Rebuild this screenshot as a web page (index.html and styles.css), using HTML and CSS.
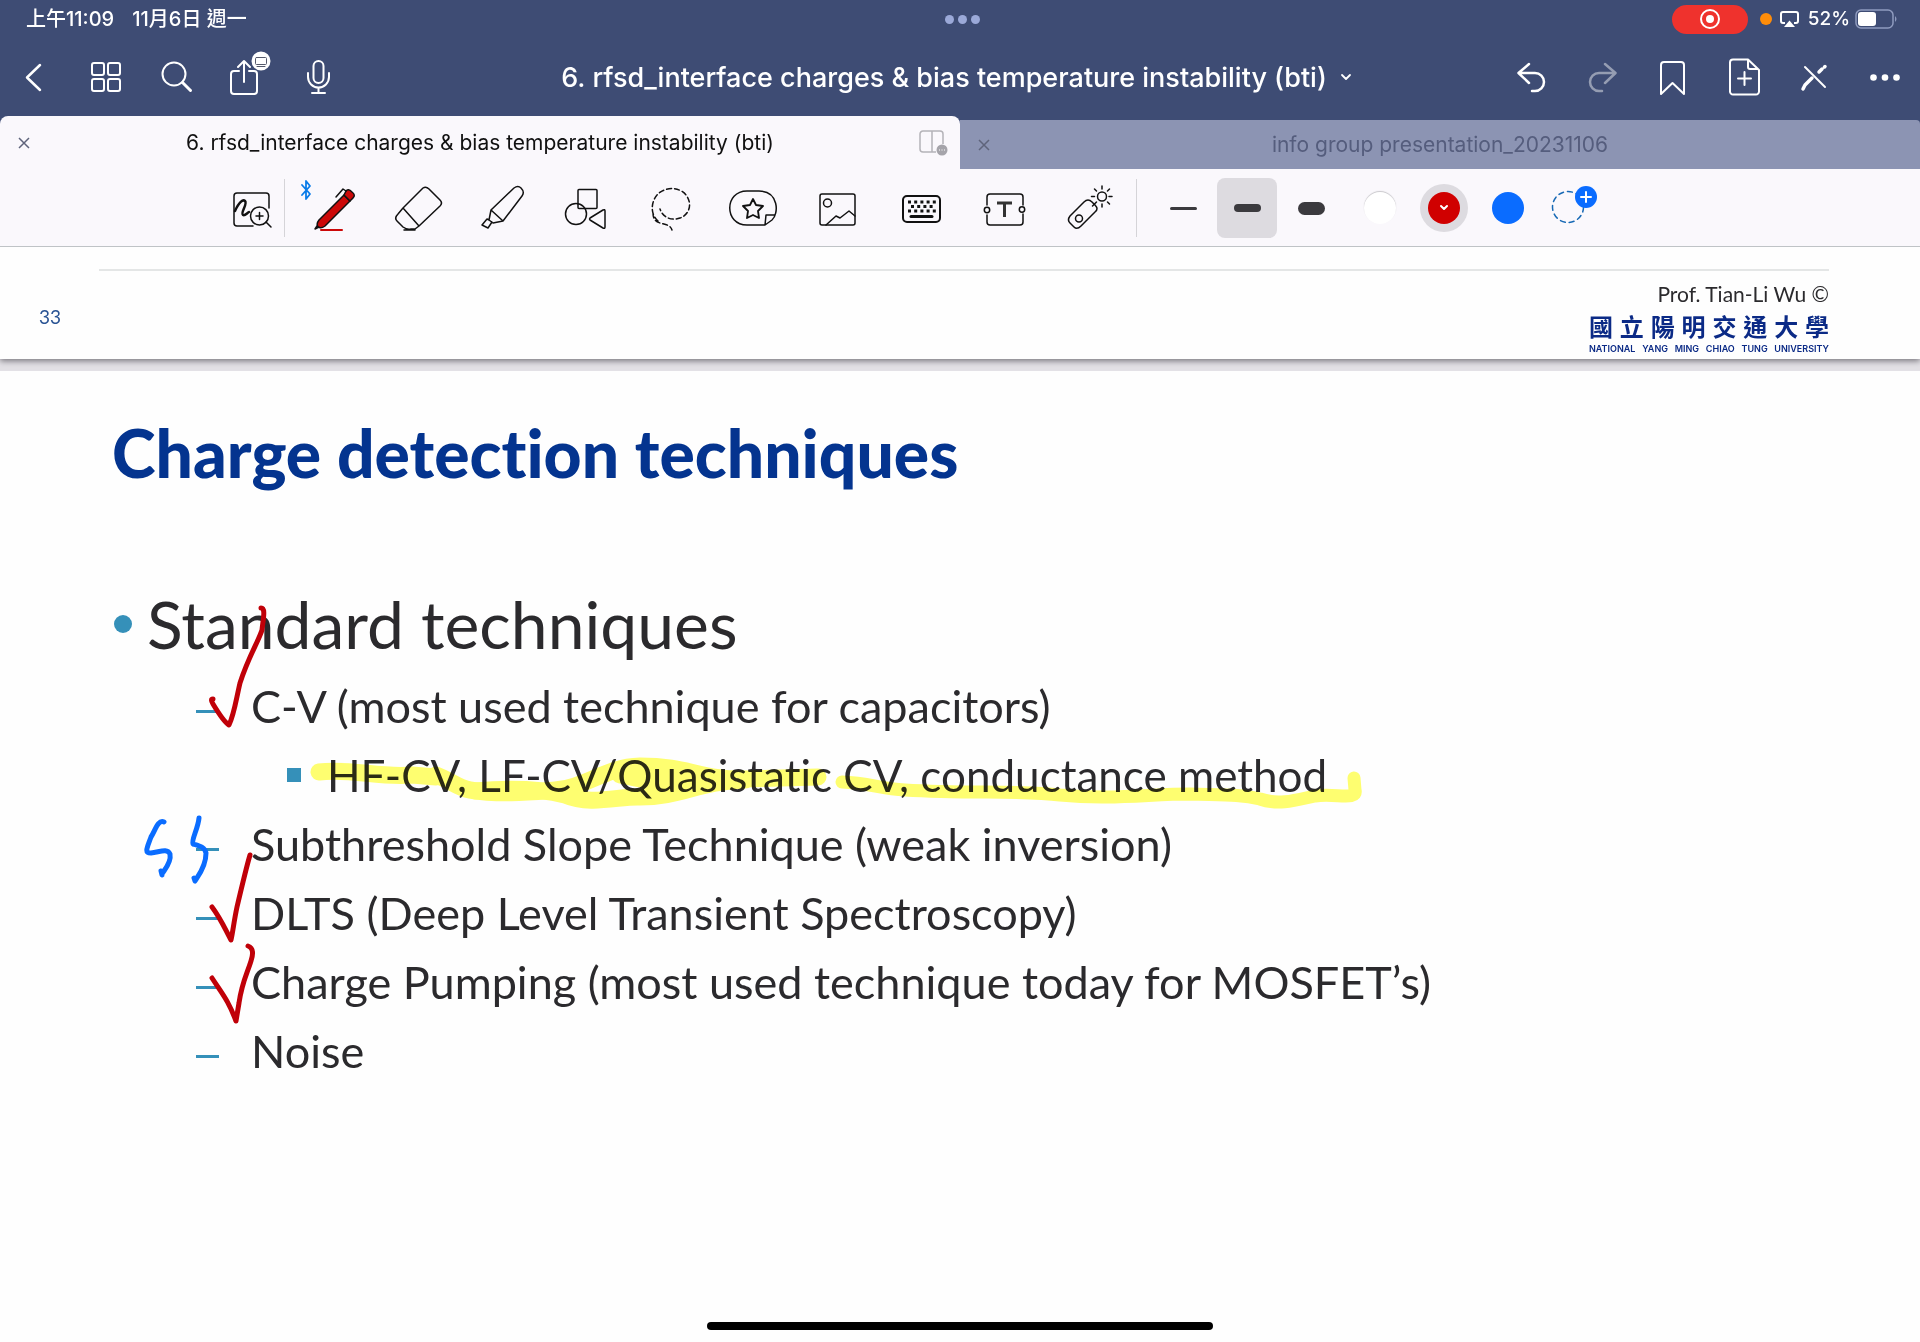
FILE: index.html
```html
<!DOCTYPE html>
<html lang="zh-Hant">
<head>
<meta charset="utf-8">
<meta name="viewport" content="width=device-width, initial-scale=1">
<title>6. rfsd_interface charges &amp; bias temperature instability (bti)</title>
<link rel="stylesheet" href="styles.css">
</head>
<body>
<header class="chrome">
  <div class="status">
    <div class="status-left"><span>上午11:09</span><span>11月6日 週一</span></div>
    <div class="status-mid"><i></i><i></i><i></i></div>
    <div class="status-right">
      <span class="rec"><svg width="22" height="22" viewBox="0 0 22 22"><circle cx="11" cy="11" r="9" fill="none" stroke="#fff" stroke-width="2"/><circle cx="11" cy="11" r="4" fill="#fff"/></svg></span>
      <span class="mic-dot"></span>
      <svg class="airplay" width="20" height="18" viewBox="0 0 20 18"><path d="M5 13H3a2 2 0 0 1-2-2V4a2 2 0 0 1 2-2h13a2 2 0 0 1 2 2v7a2 2 0 0 1-2 2h-2" fill="none" stroke="#fff" stroke-width="2"/><path d="M9.500 10.500 15 17H4z" fill="#fff"/></svg>
      <span class="percent">52%</span>
      <svg width="43" height="20" viewBox="0 0 43 20"><rect x="1" y="1" width="37" height="18" rx="5" fill="none" stroke="#8f9bbf" stroke-width="1.500"/><rect x="3" y="3" width="18" height="14" rx="3" fill="#fff"/><path d="M40 7q3 3 0 6z" fill="#8f9bbf"/></svg>
    </div>
  </div>
  <div class="nav">
    <div class="nav-group">
      <button class="nav-btn" aria-label="Back"><svg viewBox="0 0 71 76"><path d="M40 25 27 37.500 40 50"/></svg></button>
      <button class="nav-btn" aria-label="Thumbnails"><svg viewBox="0 0 71 76"><g stroke-width="2"><rect x="21" y="23" width="12" height="12" rx="2"/><rect x="37" y="23" width="12" height="12" rx="2"/><rect x="21" y="39" width="12" height="12" rx="2"/><rect x="37" y="39" width="12" height="12" rx="2"/></g></svg></button>
      <button class="nav-btn" aria-label="Search"><svg viewBox="0 0 71 76"><circle cx="32" cy="34" r="11.500" stroke-width="2"/><path d="m40.500 42.500 8 8" stroke-width="3"/></svg></button>
      <button class="nav-btn" aria-label="Share"><svg viewBox="0 0 71 76"><g stroke-width="2"><path d="M26 31h-5a3 3 0 0 0-3 3v17a3 3 0 0 0 3 3h20a3 3 0 0 0 3-3V34a3 3 0 0 0-3-3h-5M31 42V21M25 27l6-6 6 6"/></g><circle cx="48" cy="21" r="9.500" fill="#fff" stroke="none"/><g stroke="#55596b" stroke-width="1"><rect x="42.500" y="17.500" width="11" height="7" rx="1"/><path d="M44 26.500h8"/></g></svg></button>
      <button class="nav-btn" aria-label="Record"><svg viewBox="0 0 71 76"><g stroke-width="2"><rect x="29.500" y="21" width="10" height="22" rx="5"/><path d="M24 33v4a10.500 10.500 0 0 0 21 0v-4M34.500 48v5M28 53h13"/></g></svg></button>
    </div>
    <button class="doc-title"><span>6. rfsd_interface charges &amp; bias temperature instability (bti)</span><svg width="12" height="8" viewBox="0 0 12 8"><path d="m2 2 4 4 4-4" stroke-width="1.800"/></svg></button>
    <div class="nav-group">
      <button class="nav-btn" aria-label="Undo"><svg viewBox="0 0 71 76"><path d="M35 24 24.500 33 35 43M25 33h16a9 9 0 0 1 0 18h-3"/></svg></button>
      <button class="nav-btn dim" aria-label="Redo" disabled><svg viewBox="0 0 71 76"><path d="m40 24 10.500 9L40 43M50 33H34a9 9 0 0 0 0 18h3"/></svg></button>
      <button class="nav-btn" aria-label="Bookmark"><svg viewBox="0 0 71 76"><path d="M25 54V25a3 3 0 0 1 3-3h17a3 3 0 0 1 3 3v29L36.500 43z" stroke-width="2"/></svg></button>
      <button class="nav-btn" aria-label="Add page"><svg viewBox="0 0 71 76"><g stroke-width="2"><path d="M41 19.500H26a3 3 0 0 0-3 3v29a3 3 0 0 0 3 3h23a3 3 0 0 0 3-3V30zM41 20v7a2 2 0 0 0 2 2h8"/><path d="M37.500 32v13M31 38.500h13"/></g></svg></button>
      <button class="nav-btn" aria-label="Read only"><svg viewBox="0 0 71 76"><path d="m27 27 20 20" stroke-width="2"/><path d="m25 49 2-4 7-7M41 32l3-3M46.500 27l.5-.5" stroke-width="3.500"/></svg></button>
      <button class="nav-btn" aria-label="More"><svg viewBox="0 0 71 76"><g fill="#fff" stroke="none"><circle cx="24.500" cy="37.500" r="3.300"/><circle cx="36" cy="37.500" r="3.300"/><circle cx="47.500" cy="37.500" r="3.300"/></g></svg></button>
    </div>
  </div>
  <div class="tabs">
    <div class="tab active">
      <button class="tab-close" aria-label="Close tab"><svg width="12" height="12" viewBox="0 0 12 12"><path d="m1 1 10 10M11 1 1 11"/></svg></button>
      <span>6. rfsd_interface charges &amp; bias temperature instability (bti)</span>
      <button class="tab-split" aria-label="Split view"><svg width="30" height="26" viewBox="0 0 30 26"><path d="M17 22H4a3 3 0 0 1-3-3V4a3 3 0 0 1 3-3h17a3 3 0 0 1 3 3v10M13 1v21" fill="none" stroke="#b4b3b8" stroke-width="1.500"/><circle cx="23" cy="20" r="5.500" fill="#a5a4aa"/><path d="M20 20h1m1.500 0h1m1.500 0h1" stroke="#fff"/></svg></button>
    </div>
    <div class="tab">
      <button class="tab-close" aria-label="Close tab"><svg width="12" height="12" viewBox="0 0 12 12"><path d="m1 1 10 10M11 1 1 11"/></svg></button>
      <span>info group presentation_20231106</span>
    </div>
  </div>
</header>

<div class="toolbar" role="toolbar" aria-label="Drawing tools">
  <button class="tool" aria-label="Zoom window"><svg viewBox="0 0 84 77"><path d="M43 57H27a3 3 0 0 1-3-3V27a3 3 0 0 1 3-3h29a3 3 0 0 1 3 3v12"/><path d="M25 42c4-9 8-12 10-10 3 3-5 12-2 14 2 1 4-2 6-3" stroke-width="2.500"/><circle cx="49.500" cy="47" r="9"/><path d="m56 53 5 5M49.500 43.500v7M46 47h7"/></svg></button>
  <i class="rule after-zoom"></i>
  <button class="tool" aria-label="Pen"><svg viewBox="0 0 84 77"><path d="m8 16 8 9-4 5V12l4 5-8 9" stroke="#087be8" stroke-width="1.800"/><path d="m25 51 25-25 6 6-25 25q-4 3-7 1-2-3 1-7z" fill="#cc0909"/><path d="m50 26 2-4q2-3 6 1 4 3 1 6l-3 3z" fill="#cc0909"/><path d="m42 28 7-8 3 2M23 57l-2 3 4-2"/><path d="M27 61h21" stroke="#cc0909" stroke-width="2"/></svg></button>
  <button class="tool" aria-label="Eraser"><svg viewBox="0 0 84 77"><path d="m25 39 20-20q3-2 6 1l11 11q3 3 0 6L41 57zM25 39l-5 6q-4 4-1 7l6 6q4 3 8 2h4l4-3M26 61h11"/></svg></button>
  <button class="tool" aria-label="Highlighter"><svg viewBox="0 0 84 77"><path d="m29 41 23-22q4-3 7 0 4 4 1 8L41 52zM29 41l-2 10 4 3 10-2M27 51l-2-1-5 6 6 3 4-6"/></svg></button>
  <button class="tool" aria-label="Shapes"><svg viewBox="0 0 84 77"><rect x="32" y="20.500" width="19" height="19" rx="1"/><circle cx="30" cy="45" r="10.500"/><path d="m44 49 13-8q2-1 2 1v16q0 2-2 1l-13-8q-1-1 0-2z"/></svg></button>
  <button class="tool" aria-label="Lasso"><svg viewBox="0 0 84 77"><path d="M28 52c-8-7-7-19-1-26 8-9 23-8 29 0 7 9 3 20-6 23-8 3-17 0-20-9M23 44c0 15 16 7 19 17" stroke-dasharray="5 3"/></svg></button>
  <button class="tool" aria-label="Stickers"><svg viewBox="0 0 84 77"><path d="M33 22h12c20 0 20 23 13 29l-7 5H33c-23 0-23-34 0-34zM51 56l1-10h9"/><path d="m39 30 3 6 7 1-5 5 1 7-6-3-6 3 1-7-5-5 7-1z" stroke-width="1.800"/></svg></button>
  <button class="tool" aria-label="Image"><svg viewBox="0 0 84 77"><rect x="22" y="25" width="35" height="31" rx="2"/><circle cx="29.500" cy="34" r="4"/><path d="m28 56 10-9 4 2 9-7 6 5"/></svg></button>
  <button class="tool" aria-label="Keyboard"><svg viewBox="0 0 84 77"><rect x="21" y="27" width="37" height="26" rx="4" stroke-width="2"/><path d="M26 33h28M26 42h28" stroke-width="3" stroke-dasharray="3 3.200" stroke-linecap="butt"/><path d="M29 37.500h22" stroke-width="3" stroke-dasharray="3 3.200" stroke-linecap="butt"/><path d="M29 47.500h21" stroke-width="3"/></svg></button>
  <button class="tool" aria-label="Text"><svg viewBox="0 0 84 77"><path d="M21 36V28q0-3 3-3h30q3 0 3 3v8M21 46v7q0 3 3 3h30q3 0 3-3v-8"/><circle cx="21" cy="41" r="2.700"/><circle cx="56" cy="40.500" r="2.700"/><path d="M31 34h15M38.500 34v14" stroke="#333" stroke-width="3" stroke-linecap="butt"/></svg></button>
  <button class="tool" aria-label="Laser pointer"><svg viewBox="0 0 84 77"><path d="m20 47 14-14q4-4 8 0l3 3q4 4 0 7L31 57q-4 4-7 1l-4-4q-3-3 0-7z"/><circle cx="29" cy="49.500" r="3.500"/><circle cx="52" cy="27.500" r="4.500"/><path d="M52 20v-3M52 38v-3M44.500 27.500h-3M62 27.500h-3M46.500 22l-2-2M57.500 22l2-2M57.500 33l2 2M46.500 33l-4 4"/></svg></button>
  <i class="rule after-tools"></i>
  <button class="width" aria-label="Thin"><i class="thin"></i></button>
  <button class="width selected" aria-label="Medium"><i class="medium"></i></button>
  <button class="width" aria-label="Thick"><i class="thick"></i></button>
  <div class="colors">
    <button class="color" aria-label="White"><i class="swatch white"></i></button>
    <button class="color" aria-label="Red"><i class="swatch red"><svg width="10" height="7" viewBox="0 0 10 7"><path d="m2 2 3 3 3-3" stroke="#fff" stroke-width="2"/></svg></i></button>
    <button class="color" aria-label="Blue"><i class="swatch blue"></i></button>
    <button class="color" aria-label="Add colour"><svg viewBox="0 0 64 77"><circle cx="28" cy="38" r="15.500" stroke="#1769b5" stroke-dasharray="5 4"/><circle cx="46" cy="28" r="11" fill="#0a6cff" stroke="none"/><path d="M46 23v10M41 28h10" stroke="#fff" stroke-width="2"/></svg></button>
  </div>
</div>

<main class="pages">
  <section class="page-end">
    <span class="page-number">33</span>
    <div class="credit">
      <p class="prof">Prof. Tian-Li Wu ©</p>
      <p class="uni-zh">國 立 陽 明 交 通 大 學</p>
      <p class="uni-en">NATIONAL YANG MING CHIAO TUNG UNIVERSITY</p>
    </div>
  </section>
  <section class="slide">
    <h1>Charge detection techniques</h1>
    <ul class="topics">
      <li class="topic">Standard techniques
        <ul class="methods">
          <li>C-V (most used technique for capacitors)
            <ul class="details"><li>HF-CV, LF-CV/Quasistatic CV, conductance method</li></ul>
          </li>
          <li>Subthreshold Slope Technique (weak inversion)</li>
          <li>DLTS (Deep Level Transient Spectroscopy)</li>
          <li>Charge Pumping (most used technique today for MOSFET’s)</li>
          <li>Noise</li>
        </ul>
      </li>
    </ul>
    <svg class="ink marker" width="1400" height="700" viewBox="0 371 1400 700" aria-hidden="true">
      <g stroke="#ffff70" stroke-width="17">
        <path d="M319 772 C350 768 380 778 412 775 L436 777"/>
        <path d="M436 775 C450 780 458 788 470 790 C500 795 530 792 555 790 C585 788 605 767 640 766 C690 766 700 780 745 779 L818 777"/>
        <path d="M475 791 C520 787 545 790 565 795 C590 806 620 796 640 797 C680 797 700 781 745 780"/>
        <path d="M620 775 L660 783 L700 778"/>
      </g>
      <path stroke="#ffff70" stroke-width="13" d="M842 782 C870 783 880 789 905 790 C970 794 1020 790 1060 795 C1110 800 1150 794 1190 794 C1220 795 1240 794 1260 799 C1280 806 1300 799 1315 796 C1335 793 1358 801 1355 790 L1354 778"/>
    </svg>
    <svg class="ink" width="1400" height="700" viewBox="0 371 1400 700" aria-hidden="true">
      <g stroke="#c00008" stroke-width="5">
        <path d="M261 608 C266 608 263 620 262 630 C259 640 248 658 240 683 C236 700 234 715 229 725 C224 722 219 714 213 704 Q210 699 213 699"/>
        <path d="M250 855 C247 865 241 890 237 907 C234 921 233 931 231 940 C225 929 221 919 212 907"/>
        <path d="M248 946 C254 948 253 955 251 961 C247 974 242 982 239 1003 L236 1021 C228 1000 223 995 212 978"/>
      </g>
      <g stroke="#0a6cff" stroke-width="5">
        <path d="M164 822 C158 819 155 831 151 837 C147 848 144 853 151 853 C160 852 167 848 170 854 C172 864 161 873 162 875 L161 871"/>
        <path d="M199 818 C198 829 191 840 193 844 C200 846 205 847 206 853 C206 867 198 876 195 881 L194 878"/>
      </g>
    </svg>
    <i class="home"></i>
  </section>
</main>
</body>
</html>
```
FILE: styles.css
```css
* { box-sizing: border-box; }

body {
  margin: 0;
  min-height: 100vh;
  display: flex;
  flex-direction: column;
  background: #fefefe;
  color: #2b2a2d;
  font-family: Inter, "Noto Sans CJK TC", sans-serif;
}

button {
  margin: 0;
  padding: 0;
  border: 0;
  background: none;
  color: inherit;
  font: inherit;
}

svg { display: block; flex: none; }
p, h1, ul { margin: 0; padding: 0; }
ul { list-style: none; }

/* status bar, navigation and tabs */
.chrome { background: #3e4c74; color: #fff; }

.status {
  display: grid;
  grid-template-columns: 1fr auto 1fr;
  align-items: center;
  height: 40px;
  padding: 0 22px 2px 26px;
  font-size: 19px;
  font-weight: 500;
  line-height: 24px;
}
.status-left { display: flex; gap: 18px; font-size: 20px; }
.status-mid { display: flex; gap: 4px; }
.status-mid i { width: 9px; height: 9px; border-radius: 50%; background: #9ba9d8; }
.status-right { display: flex; align-items: center; justify-content: flex-end; }
.rec {
  display: flex;
  align-items: center;
  justify-content: center;
  width: 76px;
  height: 29px;
  border-radius: 15px;
  background: #ef322d;
}
.mic-dot { width: 12px; height: 12px; margin: 0 8px 0 12px; border-radius: 50%; background: #ff8d0a; }
.percent { margin: 0 5px 0 8px; }

.nav { display: flex; justify-content: space-between; height: 76px; }
.nav-group { display: flex; }
.nav-btn { width: 71px; height: 76px; }
.nav svg {
  fill: none;
  stroke: #fff;
  stroke-width: 2.5;
  stroke-linecap: round;
  stroke-linejoin: round;
}
.dim svg { opacity: .45; }
.doc-title {
  display: flex;
  align-items: center;
  gap: 13px;
  margin-left: 64px;
  padding-bottom: 2px;
  font-size: 27px;
  font-weight: 500;
  white-space: nowrap;
}

.tabs { display: grid; grid-template-columns: 1fr 1fr; align-items: end; font-size: 21px; }
.tab {
  display: grid;
  grid-template-columns: 48px 1fr 48px;
  align-items: center;
  height: 49px;
  border-radius: 0 4px 0 0;
  background: #8c94b3;
  color: #555d7d;
  text-align: center;
}
.tab.active { height: 53px; border-radius: 8px 8px 0 0; background: #faf8fc; color: #111; }
.tab-close { display: flex; justify-content: center; }
.tab-close path { fill: none; stroke: #5f647b; stroke-width: 1.5; }
.tab-split { display: flex; justify-content: flex-end; padding-right: 11px; }

/* drawing tools */
.toolbar {
  position: relative;
  z-index: 1;
  display: flex;
  height: 78px;
  padding-left: 210px;
  border-bottom: 1px solid #bfc3c6;
  background: #faf8fc;
}
.toolbar svg {
  fill: none;
  stroke: #111;
  stroke-width: 1.5;
  stroke-linecap: round;
  stroke-linejoin: round;
}
.tool { width: 84px; height: 77px; flex: none; }
.rule { width: 1px; height: 58px; margin-top: 10px; background: #d5d4d8; }
.after-zoom { margin-left: -10px; margin-right: 9px; }
.after-tools { margin-left: 2px; margin-right: 14px; }
.width {
  display: flex;
  align-items: center;
  justify-content: center;
  width: 60px;
  height: 60px;
  margin: 9px 2px;
  border-radius: 8px;
}
.width.selected { background: #dddbe0; }
.width i { width: 27px; border-radius: 7px; background: #3b3a3e; }
.thin { height: 3px; }
.medium { height: 8px; }
.thick { height: 13px; }
.colors { display: flex; margin-left: 5px; }
.color { display: flex; align-items: center; justify-content: center; width: 64px; height: 77px; }
.swatch { display: flex; align-items: center; justify-content: center; width: 32px; height: 32px; border-radius: 50%; }
.white { background: #fff; box-shadow: 0 -1px 1px #c9c8cc; }
.red { background: #d00000; box-shadow: 0 0 0 8px #dddbe0; }
.blue { background: #0a6cff; }

/* document pages */
.pages {
  display: flex;
  flex: 1;
  flex-direction: column;
  font-family: Lato, "Noto Sans CJK TC", sans-serif;
  font-variant-ligatures: none;
}
.page-end {
  display: flex;
  justify-content: space-between;
  height: 112px;
  margin-bottom: 12px;
  padding: 22px 91px 0 39px;
  background: linear-gradient(#e4e6e6, #e4e6e6) 99px 22px / calc(100% - 190px) 2px no-repeat #fefefe;
  box-shadow: 0 2px 6px #77757c, 0 12px 0 #e3e1e6;
}
.page-number { margin-top: 36px; color: #2a5494; font-size: 19px; line-height: 24px; }
.credit { width: 240px; }
.prof { margin-top: 12px; font-size: 21px; line-height: 26px; text-align: right; white-space: nowrap; }
.uni-zh {
  color: #0b2a86;
  font-family: "Noto Sans CJK TC", sans-serif;
  font-size: 24px;
  font-weight: 700;
  line-height: 37px;
  text-align-last: justify;
  white-space: nowrap;
}
.uni-en {
  color: #0b2a86;
  font-family: Inter, sans-serif;
  font-size: 9px;
  font-weight: 600;
  line-height: 10px;
  text-align-last: justify;
  white-space: nowrap;
}

.slide {
  position: relative;
  display: flex;
  flex: 1;
  flex-direction: column;
  padding: 42px 91px 12px 112px;
  background: #fefefe;
}
h1 { color: #04348f; font-size: 66px; font-weight: 900; line-height: 80px; }
.topics { margin-top: 91px; }
.topic { padding-left: 35px; font-size: 66px; line-height: 80px; }
.methods { margin-top: 8px; padding-left: 104px; font-size: 45px; line-height: 69px; }
.details { padding-left: 76px; font-size: 44px; }
li { position: relative; }
li::before { content: ""; position: absolute; background: #3590b9; }
.topic::before { top: 31px; left: 2px; width: 18px; height: 18px; border-radius: 50%; }
.methods > li::before { top: 38px; left: -55px; width: 23px; height: 3px; }
.details > li::before { top: 27px; left: -40px; width: 14px; height: 14px; }

/* handwriting lies over the slide text */
.ink {
  position: absolute;
  top: 0;
  left: 0;
  fill: none;
  stroke-linecap: round;
  stroke-linejoin: round;
}
.marker { mix-blend-mode: multiply; }
.home { align-self: center; width: 506px; height: 8px; margin-top: auto; margin-left: 21px; margin-right: 42px; border-radius: 4px; background: #000; }
```
